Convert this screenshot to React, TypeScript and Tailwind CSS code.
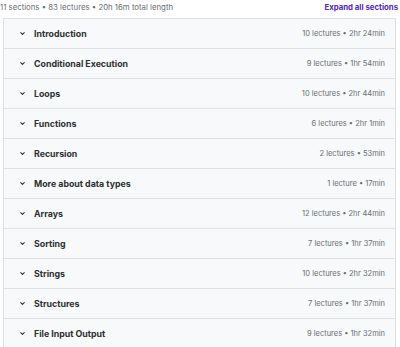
const sections = [
  { title: "Introduction", meta: "10 lectures • 2hr 24min" },
  { title: "Conditional Execution", meta: "9 lectures • 1hr 54min" },
  { title: "Loops", meta: "10 lectures • 2hr 44min" },
  { title: "Functions", meta: "6 lectures • 2hr 1min" },
  { title: "Recursion", meta: "2 lectures • 53min" },
  { title: "More about data types", meta: "1 lecture • 17min" },
  { title: "Arrays", meta: "12 lectures • 2hr 44min" },
  { title: "Sorting", meta: "7 lectures • 1hr 37min" },
  { title: "Strings", meta: "10 lectures • 2hr 32min" },
  { title: "Structures", meta: "7 lectures • 1hr 37min" },
  { title: "File Input Output", meta: "9 lectures • 1hr 32min" },
];

const Chevron = () => (
  <svg width="7" height="7" viewBox="0 0 24 24" fill="none" stroke="#2d2f31" strokeWidth="3.5" strokeLinecap="round" strokeLinejoin="round">
    <path d="M6 9l6 6 6-6" />
  </svg>
);

const App = () => {
  return (
    <div className="w-[400px] h-[347px] overflow-hidden bg-white" style={{ fontFamily: "Inter, 'Noto Sans', sans-serif" }}>
      <div className="flex items-center justify-between h-[18px] pr-[2px] pb-[2px]">
        <span className="text-[7.8px] text-[#6a6f73]">
          11 sections • 83 lectures • 20h 16m total length
        </span>
        <span className="text-[7.8px] font-bold text-[#5624d0]">Expand all sections</span>
      </div>
      <div className="ml-[3px] w-[393px] border border-[#dce1e4]">
        {sections.map((s) => (
          <div
            key={s.title}
            className="flex items-center h-[30px] bg-[#f7f9fa] border-b border-[#dce1e4] pl-[15px] pr-[10px]"
          >
            <Chevron />
            <span className="ml-[8px] text-[8.8px] font-bold text-[#2d2f31]">{s.title}</span>
            <span className="ml-auto text-[7.5px] text-[#6a6f73]">{s.meta}</span>
          </div>
        ))}
      </div>
    </div>
  );
};

export default App;
